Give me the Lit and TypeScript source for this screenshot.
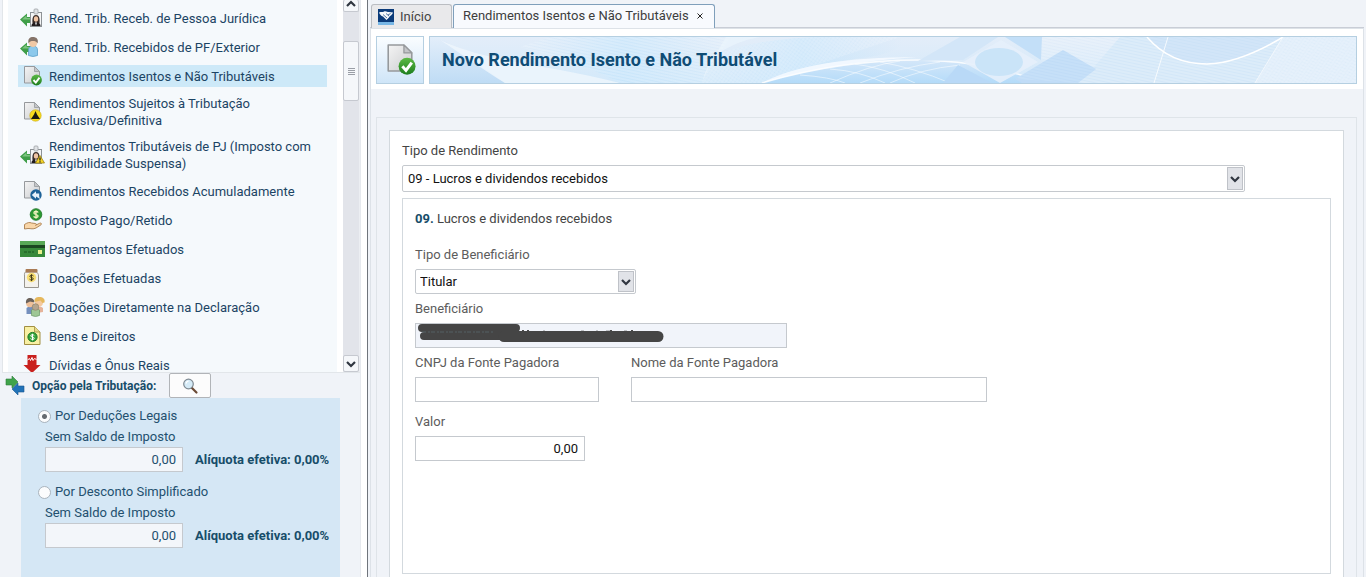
import { LitElement, html, css, svg, TemplateResult } from "lit";
import { customElement, property, state } from "lit/decorators.js";
import { classMap } from "lit/directives/class-map.js";

const arrowLeft = svg`<path d="M2 15.500 9 9.500v3.500h5v6H9v3.500z" fill="#3f9e48"/><path d="M4 15.500 8.500 11.500v2.500H14v1.500z" fill="#7cc47f"/>`;

const badge = svg`
  <rect x="12.500" y="8.500" width="11" height="14" fill="#f4f5f6" stroke="#8d9296"/>
  <rect x="16" y="5" width="4" height="5" rx="1" fill="#dfe2e5" stroke="#9da2a6" stroke-width=".8"/>
  <path d="M14.500 19c-.5-5 .5-8 3.500-8s4 3 3.500 8z" fill="#3a2c28"/>
  <path d="M13.500 22c0-3 2-3.500 4.500-3.500s4.500.5 4.500 3.500z" fill="#221c1f"/>
  <ellipse cx="18" cy="15" rx="2.200" ry="2.800" fill="#f0c4a4"/>
  <path d="M17 18.500h2l-1 3z" fill="#fff"/>`;

const sheet = svg`
  <path d="M6.500 4.500h10l5 5v11.500h-15z" fill="url(#paper)" stroke="#96999c" stroke-linejoin="round"/>
  <path d="M16.500 4.500v5h5z" fill="#c3c5c8" stroke="#96999c" stroke-width=".8" stroke-linejoin="round"/>`;

const defs = svg`<defs>
  <linearGradient id="paper" x1="0" y1="0" x2="1" y2="1"><stop offset="0" stop-color="#f4f4f4"/><stop offset="1" stop-color="#cbcdcf"/></linearGradient>
  <linearGradient id="ok" x1="0" y1="0" x2="0" y2="1"><stop offset="0" stop-color="#5cb946"/><stop offset="1" stop-color="#1c7d1d"/></linearGradient>
</defs>`;

const icons: Record<string, TemplateResult> = {
  badge: svg`${arrowLeft}${badge}`,
  person: svg`${arrowLeft}
    <path d="M10.500 22.500V17c0-3 2-4 4.500-4s4.500 1 4.500 4v5.500q-4.500 2-9 0z" fill="#8cc9ec" stroke="#5c9fc8" stroke-width=".8"/>
    <circle cx="15" cy="10" r="4" fill="#f0c9a6"/>
    <path d="M10.500 10.500c-1-5 1.500-6.500 4.500-6.500s6 2 4.500 6.500C18.500 8.500 17 8 15 8s-3.500.5-4.500 2.500z" fill="#857469"/>`,
  sheetOk: svg`${sheet}<circle cx="18.500" cy="18" r="5.400" fill="url(#ok)"/><path d="m15.500 18 2.300 2.600 3.700-5" fill="none" stroke="#fff" stroke-width="1.900"/>`,
  sheetLion: svg`${sheet}<circle cx="17.500" cy="17.500" r="5.700" fill="#f6dc1e" stroke="#c9a80f" stroke-width=".6"/><path d="m17.500 13 1.500 3.500 3 4.500h-9l3-4.500z" fill="#1a1a12"/>`,
  badgeWarn: svg`${arrowLeft}${badge}<path d="m22 14.500 4.500 7.500h-9z" fill="#f7d626" stroke="#a08410" stroke-width=".8" stroke-linejoin="round"/><path d="M22 16.500v3m0 .8v1.200" stroke="#222" stroke-width="1.300"/>`,
  sheetBack: svg`${sheet}<circle cx="18" cy="18" r="5.700" fill="#1d6298"/><path d="m13.800 18 4.200-3.800v2.300h3.200v3L22 22l-4-2.500v2.300z" fill="#e6f2fb"/>`,
  hand: svg`<circle cx="18" cy="8.500" r="5.800" fill="#2b9a32" stroke="#167020" stroke-width=".8"/>
    <path d="M20.200 6.500c-1-1.500-4.300-1.300-4.300.4 0 2 4.200 1.200 4.200 3.200 0 1.800-3.500 1.900-4.500.3M18 4.300v8.400" fill="none" stroke="#f2f3c0" stroke-width="1.300"/>
    <path d="M6.500 18.500c3-2 5-2.500 7-1.500l4 .5c1.500.3 1 1.800 0 1.800l4-2c1.500-.7 2.700.5 1.500 1.500l-5 3.200c-3 1.500-5 .5-8 .5l-3.500.5z" fill="#f9d6a8" stroke="#a87d4d" stroke-width=".9"/>`,
  card: svg`<rect x="2" y="6" width="25" height="16" fill="#37893a"/><rect x="2" y="6" width="25" height="4" fill="#58a856"/><rect x="2" y="10" width="25" height="3" fill="#1b4720"/><path d="M6 17h10" stroke="#1b571f" stroke-dasharray="3 1"/><rect x="20" y="15" width="4" height="4" fill="#e8f08c"/>`,
  jar: svg`<path d="M7.500 8C6 9.500 6.500 10 6.500 12v11.500h14V12c0-2-.5-2.500-2-4z" fill="#f4f2ec" stroke="#98958e"/>
    <rect x="7.500" y="5" width="12" height="3.500" rx="1" fill="#a97b54"/><circle cx="13.500" cy="13.500" r="4.700" fill="#f8df74"/>
    <path d="M15.500 12c-1-1.200-3.700-1-3.700.3 0 1.500 3.500.9 3.500 2.500s-2.800 1.600-3.800.3M13.500 10.300v6.800" fill="none" stroke="#433a18"/>`,
  people: svg`<path d="M8.500 20v-5q4.500-4 9 0v6h-9z" fill="#7590bd"/><circle cx="12" cy="10.500" r="3.800" fill="#efc19a"/><path d="M8 10.500c-.5-4 1.500-5.500 4-5.500s4.500 1.500 4.500 4.500L12 8.500z" fill="#6b625b"/>
    <path d="M19 20v-5q3-3 6 0v4z" fill="#e5b39a"/><circle cx="21" cy="9.500" r="4" fill="#f4caa0"/><path d="M16.500 9c-.5-4 2-5 4.500-5 4 0 6.500 2 5.500 5.500l-2 .5-2-2.500z" fill="#e5b85d"/>
    <path d="M13.500 22.500V17q4-3.500 8 0v5.500q-4 2-8 0z" fill="#9ec795" stroke="#6b9868" stroke-width=".7"/><circle cx="17.500" cy="14" r="3.300" fill="#b4a58e" stroke="#93836b" stroke-width=".7"/>`,
  asset: svg`<path d="M6.500 4.500h10l5.500 5.500v12.500H6.500z" fill="#f8f0a3" stroke="#a18f42"/><path d="M16.500 4.500V10H22" fill="#e4d987" stroke="#a18f42" stroke-width=".8"/>
    <circle cx="14.500" cy="15" r="4.600" fill="#35a53a" stroke="#1d7725"/><path d="M16.300 13.500c-1-1.200-3.600-1-3.600.3 0 1.500 3.500.9 3.500 2.500s-2.700 1.500-3.700.3M14.500 11.800v6.600" fill="none" stroke="#fff"/>`,
  debt: svg`<path d="M9.500 4h9v10h4l-8.500 8-8.500-8h4z" fill="#c9211e"/><path d="M9.500 9l2-1.500 1 2 1.500-3 1 3 1.500-2 2 1" fill="none" stroke="#fff"/>`,
};

const icon = (name: string) =>
  html`<svg class="icon" viewBox="0 0 28 28" aria-hidden="true">${defs}${icons[name]}</svg>`;

const chevron = (up = false) => html`<svg class="chevron" viewBox="0 0 10 8" aria-hidden="true">
  <path d=${up ? "M1 6l4-4 4 4" : "M1 2l4 4 4-4"} fill="none" stroke="#303640" stroke-width="2.200"/></svg>`;

const shared = css`
  * { box-sizing: border-box; }
  input, select, button { font: inherit; color: inherit; margin: 0; border-radius: 0; }
  .box {
    height: 25px;
    border: 1px solid #c5c9ce;
    background: #fff;
    padding: 0 6px;
    outline: none;
    min-width: 0;
  }
  .number { text-align: right; }
  .chevron { width: 10px; height: 8px; display: block; }
`;

const menu: [string, string][] = [
  ["badge", "Rend. Trib. Receb. de Pessoa Jurídica"],
  ["person", "Rend. Trib. Recebidos de PF/Exterior"],
  ["sheetOk", "Rendimentos Isentos e Não Tributáveis"],
  ["sheetLion", "Rendimentos Sujeitos à Tributação Exclusiva/Definitiva"],
  ["badgeWarn", "Rendimentos Tributáveis de PJ (Imposto com Exigibilidade Suspensa)"],
  ["sheetBack", "Rendimentos Recebidos Acumuladamente"],
  ["hand", "Imposto Pago/Retido"],
  ["card", "Pagamentos Efetuados"],
  ["jar", "Doações Efetuadas"],
  ["people", "Doações Diretamente na Declaração"],
  ["asset", "Bens e Direitos"],
  ["debt", "Dívidas e Ônus Reais"],
];

@customElement("side-menu")
class SideMenu extends LitElement {
  @state() private selected = 2;

  static styles = [shared, css`
    :host { display: flex; flex: 1; min-height: 0; margin-left: 2px; border: solid #e2e6ea; border-width: 0 0 1px 1px; background: #fff; }
    nav { flex: 1; min-width: 0; overflow: hidden; margin: 0 6px 0 5px; padding: 7px 10px 0; background: #f5f9fc; }
    ul { list-style: none; margin: 0; padding: 0; display: flex; flex-direction: column; gap: 7px; }
    a { display: flex; align-items: center; gap: 3px; min-height: 22px; color: #1c4464; text-decoration: none; line-height: 17px; }
    .label { padding: 1px 0; }
    .active { background: #cde9f8; }
    .icon { width: 28px; height: 28px; flex: none; margin: -3px 0; }
    .scroll { width: 17px; display: flex; flex-direction: column; background: #e2e4ea; border-right: 1px solid #eceef2; }
    .step, .thumb { display: grid; place-items: center; padding: 0; background: #f5f7fa; border: 1px solid #c6c9d0; }
    .step { height: 17px; border-radius: 2px; }
    .up { height: 12px; border-top: 0; padding-bottom: 3px; }
    .thumb { height: 60px; margin-top: 29px; border-radius: 2px; }
    .grip { width: 7px; height: 7px; background: repeating-linear-gradient(#9a9ea6 0 1px, transparent 1px 2px); }
    .track { flex: 1; }
  `];

  render() {
    return html`
      <nav><ul>${menu.map(([name, label], i) => html`<li>
        <a href="#" class=${classMap({ active: i === this.selected })}
          @click=${(e: Event) => { e.preventDefault(); this.selected = i; }}>
          ${icon(name)}<span class="label">${label}</span></a></li>`)}</ul></nav>
      <div class="scroll">
        <button class="step up" aria-label="Rolar para cima">${chevron(true)}</button>
        <div class="thumb"><span class="grip"></span></div>
        <div class="track"></div>
        <button class="step" aria-label="Rolar para baixo">${chevron()}</button>
      </div>`;
  }
}

@customElement("tax-option")
class TaxOption extends LitElement {
  @property() label = "";
  @property({ type: Boolean }) checked = false;

  static styles = [shared, css`
    :host { display: block; color: #23506f; line-height: 16px; }
    .choice { display: flex; align-items: center; gap: 4px; }
    .choice input { appearance: none; width: 13px; height: 13px; border: 1px solid #aab4bd; border-radius: 50%; background: #fbfcfd; }
    .choice input:checked { background: radial-gradient(circle, #666b70 0 2px, #fbfcfd 3px); }
    .detail { display: grid; gap: 2px; margin: 5px 0 0 7px; }
    .line { display: flex; align-items: center; gap: 12px; }
    .line .box { width: 138px; background: #f3f6fa; }
    b { color: #174d69; white-space: nowrap; }
  `];

  render() {
    return html`
      <label class="choice"><input type="radio" .checked=${this.checked}
        @click=${() => this.dispatchEvent(new CustomEvent("choose"))}>${this.label}</label>
      <div class="detail">
        <label for="saldo">Sem Saldo de Imposto</label>
        <div class="line"><input id="saldo" class="box number" value="0,00" readonly><b>Alíquota efetiva: 0,00%</b></div>
      </div>`;
  }
}

@customElement("tax-summary")
class TaxSummary extends LitElement {
  @state() private choice = 0;

  static styles = [shared, css`
    :host { display: block; }
    header { display: flex; align-items: center; height: 25px; padding-left: 5px; }
    .arrows { width: 20px; height: 20px; margin-right: 7px; }
    h2 { margin: 0; font-size: 12px; line-height: 16px; color: #174d69; width: 137px; white-space: nowrap; }
    button { width: 42px; height: 25px; padding: 0; display: grid; place-items: center; background: #fcfcfc; border: 1px solid #b1b4b8; border-radius: 2px; }
    .lens { width: 18px; height: 18px; }
    .options { margin: 0 20px 0 21px; padding: 10px 0 29px 17px; background: #d5e7f5; display: grid; gap: 12px; }
  `];

  render() {
    return html`
      <header>
        <svg class="arrows" viewBox="0 0 20 20" aria-hidden="true">
          <path d="M1 3h6V0l6 6-6 6V9H1z" fill="#3fa34b" stroke="#2c7d3a" stroke-width=".6"/>
          <path d="M19 10h-6V7l-6 6 6 6v-3h6z" fill="#2172b8" stroke="#17568d" stroke-width=".6"/></svg>
        <h2>Opção pela Tributação:</h2>
        <button aria-label="Comparar">
          <svg class="lens" viewBox="0 0 18 18" aria-hidden="true"><path d="m10.500 10.500 5 5" stroke="#6b4a35" stroke-width="2.200" stroke-linecap="round"/>
          <circle cx="7.500" cy="7" r="4.800" fill="#d5ebf7" stroke="#7f8a92" stroke-width="1.200"/><path d="M5 6.500q.5-2 2.500-2.300" fill="none" stroke="#fff" stroke-width="1.200"/></svg>
        </button>
      </header>
      <div class="options">
        ${["Por Deduções Legais", "Por Desconto Simplificado"].map((label, i) => html`
          <tax-option label=${label} ?checked=${this.choice === i} @choose=${() => (this.choice = i)}></tax-option>`)}
      </div>`;
  }
}

@customElement("title-banner")
class TitleBanner extends LitElement {
  static styles = [shared, css`
    :host { display: flex; gap: 5px; padding: 7px 6px 5px 5px; background: #fff; }
    .tile, .banner { height: 48px; border: 1px solid #b5cfe1; }
    .tile { width: 48px; display: grid; place-items: center; background: linear-gradient(#fafdff, #cfe5f8); }
    .icon { width: 44px; height: 44px; }
    .banner { flex: 1; min-width: 0; display: grid; align-items: center; overflow: hidden; background: #dcebf9; }
    .art, h1 { grid-area: 1 / 1; }
    .art { width: 100%; height: 46px; display: block; }
    h1 { margin: 0; padding-left: 12px; font-size: 18px; line-height: 24px; color: #0f4c75; z-index: 1; white-space: nowrap; }
  `];

  render() {
    return html`
      <div class="tile">${icon("sheetOk")}</div>
      <div class="banner">
        <svg class="art" viewBox="0 0 926 46" preserveAspectRatio="xMaxYMid slice" aria-hidden="true">
          <defs>
            <linearGradient id="sky" x1="0" y1="0" x2="0" y2="1"><stop offset="0" stop-color="#e3edf9"/><stop offset="1" stop-color="#d3e9fa"/></linearGradient>
            <linearGradient id="corner" x1="0" y1="0" x2="0" y2="1"><stop offset="0" stop-color="#e3eefa"/><stop offset="1" stop-color="#bfdcf5"/></linearGradient>
            <linearGradient id="deep" x1="0" y1="0" x2="0" y2="1"><stop offset="0" stop-color="#d3e6f9"/><stop offset="1" stop-color="#b4dbf9"/></linearGradient>
            <linearGradient id="fade"><stop offset="0" stop-color="#c3e2fa" stop-opacity="0"/><stop offset=".5" stop-color="#c3e4fb"/><stop offset="1" stop-color="#c3e2fa" stop-opacity="0"/></linearGradient>
            <pattern id="mesh" width="4" height="3" patternUnits="userSpaceOnUse" patternTransform="rotate(12)"><path d="M0 1h4" stroke="#fff" stroke-width=".8" opacity=".5"/></pattern>
            <pattern id="net" width="3" height="3" patternUnits="userSpaceOnUse" patternTransform="rotate(35)"><path d="M0 1h3M1 0v3" stroke="#fff" stroke-width=".6" opacity=".4"/></pattern>
          </defs>
          <rect width="926" height="46" fill="url(#sky)"/>
          <path d="M0 0h10L75 46H0z" fill="url(#corner)"/>
          <path d="M10 3C60 26 110 26 190 46H75C55 34 30 16 10 3z" fill="#eff6fd" opacity=".8"/>
          <path d="M120 0h180L272 46H190C160 30 130 20 90 10z" fill="url(#fade)" opacity=".7"/>
          <path d="M120 0h180L272 46H190C160 30 130 20 90 10z" fill="url(#mesh)"/>
          <path d="M285 18Q330 0 400 0h70q10 12-30 20-70 8-100 26h-68z" fill="url(#fade)" opacity=".6"/>
          <path d="M272 46q5-20 14-28 20-14 44-18h-34q-18 30-24 46z" fill="#edf6fd" opacity=".6"/>
          <path d="M285 18Q330 0 400 0h70L332 46h-60z" fill="url(#net)"/>
          <path d="M332 46Q410 24 487 24 560 25 613 46z" fill="url(#deep)"/>
          <path d="M332 46Q380 20 487 20 400 26 332 46z" fill="#f4faff" opacity=".9"/>
          <path d="M332 46Q410 23 487 23 560 24 613 46" fill="none" stroke="#fff" stroke-width="1.500" opacity=".8"/>
          <path d="M400 46Q440 28 470 24M430 46q40-16 80-21M460 46q30-14 70-18M400 32q30 2 55 14M425 27q30 4 60 19M450 25q35 6 70 21M370 38q30 2 45 8" fill="none" stroke="#fff" opacity=".5"/>
          <path d="m488 24 42-24h38l-35 23z" fill="#d3e6f8"/>
          <path d="m575 0h37l-1 23z" fill="#c3dff8"/>
          <path d="M690 0h236v46H650z" fill="#d3e7f8"/>
          <path d="M612 0h314v46H648l18-14-55-9z" fill="url(#mesh)"/>
          <path d="m585 42 48-29 33 19-18 14h-56z" fill="#c0dcf7"/>
          <path d="m585 42 48-29 33 19-18 14z" fill="url(#mesh)" opacity=".5"/>
          <path d="m533 25 38-22 37 22-38 21z" fill="#e5f0fb" opacity=".9"/>
          <ellipse cx="569" cy="25" rx="24" ry="14" fill="#cae4f8"/>
          <path d="m528 28 34 18h-49z" fill="#b9d9f7"/>
          <path d="M717 0Q740 27 777 27 810 26 853 0z" fill="#cce2f7"/>
          <path d="M717 0Q740 27 777 27 810 26 853 0z" fill="url(#mesh)" opacity=".6"/>
          <path d="M717 0Q740 27 777 27 810 26 853 0" fill="none" stroke="#fff" stroke-width="1.500"/>
          <path d="M738 0 724 46M853 0 825 46" stroke="#fff" stroke-width="1" fill="none" opacity=".8"/>
          <path d="M853 0h73v46H825z" fill="#e2eefa" opacity=".6"/><path d="M853 0h73v46H825z" fill="url(#net)"/>
        </svg>
        <h1>Novo Rendimento Isento e Não Tributável</h1>
      </div>`;
  }
}

@customElement("income-form")
class IncomeForm extends LitElement {
  static styles = [shared, css`
    :host { flex: 1; display: flex; flex-direction: column; margin: 28px 6px 0 5px; padding: 12px 12px 0; border: 1px solid #dfe4e9; border-bottom: 0; line-height: 16px; color: #444; }
    form { flex: 1; display: flex; flex-direction: column; gap: 6px; padding: 12px 12px 3px; background: #fff; border: 1px solid #d3d9de; border-bottom: 0; }
    .details { flex: 1; padding: 12px; border: 1px solid #d3d9de; color: #5c5c5c; display: flex; flex-direction: column; gap: 6px; }
    p { margin: 0 0 13px; color: #444; }
    p b { color: #174d69; }
    .field { display: grid; gap: 6px; }
    .row { display: flex; gap: 32px; }
    .details label { padding-top: 1px; }
    .last { margin-top: 5px; }
    .pick { display: grid; align-items: center; justify-items: end; color: #111; }
    .pick > * { grid-area: 1 / 1; }
    select { appearance: none; width: 100%; height: 25px; padding: 0 24px 0 4px; background: #fff; border: 1px solid #c5c9ce; border-radius: 2px; outline: none; }
    .type select { height: 27px; padding-left: 5px; }
    .drop { width: 16px; height: 21px; margin-right: 2px; display: grid; place-items: center; background: #e1e3e8; border: 1px solid #bfc2c8; pointer-events: none; }
    .type .drop { height: 23px; }
    .type { margin-right: 86px; }
    .owner-type { width: 221px; }
    .owner { width: 372px; display: grid; }
    .owner > * { grid-area: 1 / 1; }
    .owner .box { background: #f1f4fa; }
    .mark { width: 250px; height: 25px; pointer-events: none; }
    .cnpj { width: 184px; }
    .name { width: 356px; }
    .value { width: 170px; color: #111; }
  `];

  render() {
    return html`<form>
      <label for="type">Tipo de Rendimento</label>
      <div class="pick type"><select id="type"><option>09 - Lucros e dividendos recebidos</option></select><span class="drop">${chevron()}</span></div>
      <div class="details">
        <p><b>09.</b> Lucros e dividendos recebidos</p>
        <div class="field">
          <label for="owner-type">Tipo de Beneficiário</label>
          <div class="pick owner-type"><select id="owner-type"><option>Titular</option><option>Dependente</option></select><span class="drop">${chevron()}</span></div>
        </div>
        <div class="field">
          <label for="owner">Beneficiário</label>
          <div class="owner">
            <input id="owner" class="box" readonly>
            <svg class="mark" viewBox="0 0 250 25" aria-hidden="true">
              <path d="M107 7.500h2m3 0h2m81 0h2m19 0h2" stroke="#4b4b4b"/>
              <path d="M128 8h2m36 0h3m12 0h2m8 0h4m14 0h3" stroke="#777" stroke-width=".8"/>
              <path d="M7 5h94M9 13h85" stroke="#454545" stroke-width="8" stroke-linecap="round"/>
              <path d="M89 13.500h154" stroke="#454545" stroke-width="11" stroke-linecap="round"/>
              <path d="M7 9h72" stroke="#5f7279" stroke-width=".6" stroke-dasharray="4 2 2 1"/>
            </svg>
          </div>
        </div>
        <div class="row">
          <div class="field"><label for="cnpj">CNPJ da Fonte Pagadora</label><input id="cnpj" class="box cnpj"></div>
          <div class="field"><label for="name">Nome da Fonte Pagadora</label><input id="name" class="box name"></div>
        </div>
        <div class="field last"><label for="value">Valor</label><input id="value" class="box number value" value="0,00"></div>
      </div>
    </form>`;
  }
}

@customElement("app-root")
class AppRoot extends LitElement {
  static styles = [shared, css`
    :host { display: flex; height: 100vh; overflow: hidden; background: #f0f3f8; font: 13px/16px Roboto, "Liberation Sans", sans-serif; color: #444; }
    aside { width: 360px; flex: none; display: flex; flex-direction: column; }
    .divider { width: 8px; flex: none; background: #fff; border-left: 1px solid #e6e9ee; border-right: 1px solid #6f747b; }
    main { flex: 1; min-width: 0; display: flex; flex-direction: column; padding: 4px 2px 0 2px; }
    .tabs { display: flex; gap: 1px; height: 24px; padding-left: 1px; border-bottom: 1px solid #c9cdd6; }
    .tab { display: flex; align-items: center; height: 25px; border: 1px solid #babdc2; border-bottom: 0; border-radius: 3px 3px 0 0; background: #e9e9eb; padding: 0; }
    .home { width: 81px; padding: 0 6px; gap: 6px; }
    .current { height: 26px; padding: 0 9px 4px 9px; gap: 7px; background: #f8fafe; border-color: #7f9fbb; color: #3d3d3d; }
    .logo { width: 16px; height: 16px; }
    .close { border: 0; background: none; padding: 0; width: 9px; height: 12px; display: grid; place-items: center; }
    .close svg { width: 6px; height: 6px; }
    .page { flex: 1; display: flex; flex-direction: column; border: solid #dde2e8; border-width: 1px 1px 0; }
  `];

  render() {
    return html`
      <aside><side-menu></side-menu><tax-summary></tax-summary></aside>
      <div class="divider"></div>
      <main>
        <div class="tabs" role="tablist">
          <button class="tab home" role="tab">
            <svg class="logo" viewBox="0 0 16 16" aria-hidden="true"><path d="M0 0h16v16H0z" fill="#0b3b7a"/><path d="M0 13h16v3H0z" fill="#78b7e6"/>
              <path d="M1 3.500c2-1 4 0 5-1 2-1 4 1 5 .5l4 .5c-1 3-3 3-4 5L8.500 11 5 7.500C3 7 2 5.500 1 3.500z" fill="#f4f8fc"/><path d="M5 5.500 9 9M8 4.500l3 2.500M12.500 4.500 10 6" stroke="#0b3b7a" stroke-width=".7"/></svg>
            Início</button>
          <div class="tab current" role="tab" aria-selected="true">Rendimentos Isentos e Não Tributáveis
            <button class="close" aria-label="Fechar"><svg viewBox="0 0 6 6"><path d="M.5.5l5 5m0-5-5 5" stroke="#222" stroke-width="1"/></svg></button>
          </div>
        </div>
        <section class="page"><title-banner></title-banner><income-form></income-form></section>
      </main>`;
  }
}
